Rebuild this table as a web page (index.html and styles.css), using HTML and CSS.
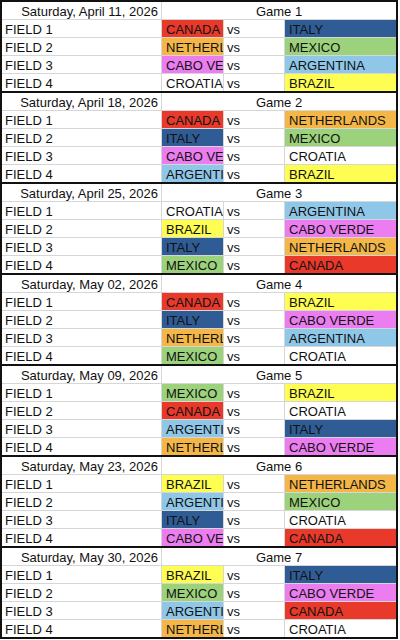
FILE: index.html
```html
<!DOCTYPE html>
<html>
<head>
<meta charset="utf-8">
<link rel="stylesheet" href="styles.css">
</head>
<body>
<div class="sheet">
  <div class="block">
    <div class="date">Saturday, April 11, 2026</div><div class="game">Game 1</div>
    <div class="field">FIELD 1</div><div class="team can">CANADA</div><div class="vs">vs</div><div class="team ita">ITALY</div>
    <div class="field">FIELD 2</div><div class="team ned">NETHERLANDS</div><div class="vs">vs</div><div class="team mex">MEXICO</div>
    <div class="field">FIELD 3</div><div class="team cpv">CABO VERDE</div><div class="vs">vs</div><div class="team arg">ARGENTINA</div>
    <div class="field">FIELD 4</div><div class="team cro">CROATIA</div><div class="vs">vs</div><div class="team bra">BRAZIL</div>
  </div>
  <div class="block">
    <div class="date">Saturday, April 18, 2026</div><div class="game">Game 2</div>
    <div class="field">FIELD 1</div><div class="team can">CANADA</div><div class="vs">vs</div><div class="team ned">NETHERLANDS</div>
    <div class="field">FIELD 2</div><div class="team ita">ITALY</div><div class="vs">vs</div><div class="team mex">MEXICO</div>
    <div class="field">FIELD 3</div><div class="team cpv">CABO VERDE</div><div class="vs">vs</div><div class="team cro">CROATIA</div>
    <div class="field">FIELD 4</div><div class="team arg">ARGENTINA</div><div class="vs">vs</div><div class="team bra">BRAZIL</div>
  </div>
  <div class="block">
    <div class="date">Saturday, April 25, 2026</div><div class="game">Game 3</div>
    <div class="field">FIELD 1</div><div class="team cro">CROATIA</div><div class="vs">vs</div><div class="team arg">ARGENTINA</div>
    <div class="field">FIELD 2</div><div class="team bra">BRAZIL</div><div class="vs">vs</div><div class="team cpv">CABO VERDE</div>
    <div class="field">FIELD 3</div><div class="team ita">ITALY</div><div class="vs">vs</div><div class="team ned">NETHERLANDS</div>
    <div class="field">FIELD 4</div><div class="team mex">MEXICO</div><div class="vs">vs</div><div class="team can">CANADA</div>
  </div>
  <div class="block">
    <div class="date">Saturday, May 02, 2026</div><div class="game">Game 4</div>
    <div class="field">FIELD 1</div><div class="team can">CANADA</div><div class="vs">vs</div><div class="team bra">BRAZIL</div>
    <div class="field">FIELD 2</div><div class="team ita">ITALY</div><div class="vs">vs</div><div class="team cpv">CABO VERDE</div>
    <div class="field">FIELD 3</div><div class="team ned">NETHERLANDS</div><div class="vs">vs</div><div class="team arg">ARGENTINA</div>
    <div class="field">FIELD 4</div><div class="team mex">MEXICO</div><div class="vs">vs</div><div class="team cro">CROATIA</div>
  </div>
  <div class="block">
    <div class="date">Saturday, May 09, 2026</div><div class="game">Game 5</div>
    <div class="field">FIELD 1</div><div class="team mex">MEXICO</div><div class="vs">vs</div><div class="team bra">BRAZIL</div>
    <div class="field">FIELD 2</div><div class="team can">CANADA</div><div class="vs">vs</div><div class="team cro">CROATIA</div>
    <div class="field">FIELD 3</div><div class="team arg">ARGENTINA</div><div class="vs">vs</div><div class="team ita">ITALY</div>
    <div class="field">FIELD 4</div><div class="team ned">NETHERLANDS</div><div class="vs">vs</div><div class="team cpv">CABO VERDE</div>
  </div>
  <div class="block">
    <div class="date">Saturday, May 23, 2026</div><div class="game">Game 6</div>
    <div class="field">FIELD 1</div><div class="team bra">BRAZIL</div><div class="vs">vs</div><div class="team ned">NETHERLANDS</div>
    <div class="field">FIELD 2</div><div class="team arg">ARGENTINA</div><div class="vs">vs</div><div class="team mex">MEXICO</div>
    <div class="field">FIELD 3</div><div class="team ita">ITALY</div><div class="vs">vs</div><div class="team cro">CROATIA</div>
    <div class="field">FIELD 4</div><div class="team cpv">CABO VERDE</div><div class="vs">vs</div><div class="team can">CANADA</div>
  </div>
  <div class="block">
    <div class="date">Saturday, May 30, 2026</div><div class="game">Game 7</div>
    <div class="field">FIELD 1</div><div class="team bra">BRAZIL</div><div class="vs">vs</div><div class="team ita">ITALY</div>
    <div class="field">FIELD 2</div><div class="team mex">MEXICO</div><div class="vs">vs</div><div class="team cpv">CABO VERDE</div>
    <div class="field">FIELD 3</div><div class="team arg">ARGENTINA</div><div class="vs">vs</div><div class="team can">CANADA</div>
    <div class="field">FIELD 4</div><div class="team ned">NETHERLANDS</div><div class="vs">vs</div><div class="team cro">CROATIA</div>
  </div>
</div>
</body>
</html>
```
FILE: styles.css
```css
html, body {
  margin: 0;
  padding: 0;
  background: #fff;
}
body {
  font-family: "Liberation Sans", Arial, sans-serif;
  font-size: 13px;
  color: #111;
}
.sheet {
  width: 394px;
  border-left: 2px solid #111;
  border-right: 2px solid #111;
  border-bottom: 2px solid #111;
}
.block {
  display: grid;
  grid-template-columns: 159px 61px 60px 111px;
  grid-auto-rows: 17px;
  column-gap: 1px;
  row-gap: 1px;
  background: #d6d6d6;
  border-top: 2px solid #111;
}
.block > div {
  background: #fff;
  line-height: 17px;
  padding-top: 1px;
  height: 17px;
  box-sizing: border-box;
  white-space: nowrap;
  overflow: hidden;
}
.date {
  text-align: right;
  padding-right: 3px;
}
.game {
  grid-column: 2 / 5;
  text-align: center;
}
.field {
  padding-left: 3px;
}
.team {
  padding-left: 4px;
}
.vs {
  padding-left: 3px;
}
.block > .can { background: #e8392b; }
.block > .ned { background: #f4b747; }
.block > .cpv { background: #ec7df0; }
.block > .ita { background: #305c95; }
.block > .mex { background: #9dd27d; }
.block > .arg { background: #8fc7e9; }
.block > .bra { background: #fdfd52; }
.block > .cro { background: #fff; }
```
